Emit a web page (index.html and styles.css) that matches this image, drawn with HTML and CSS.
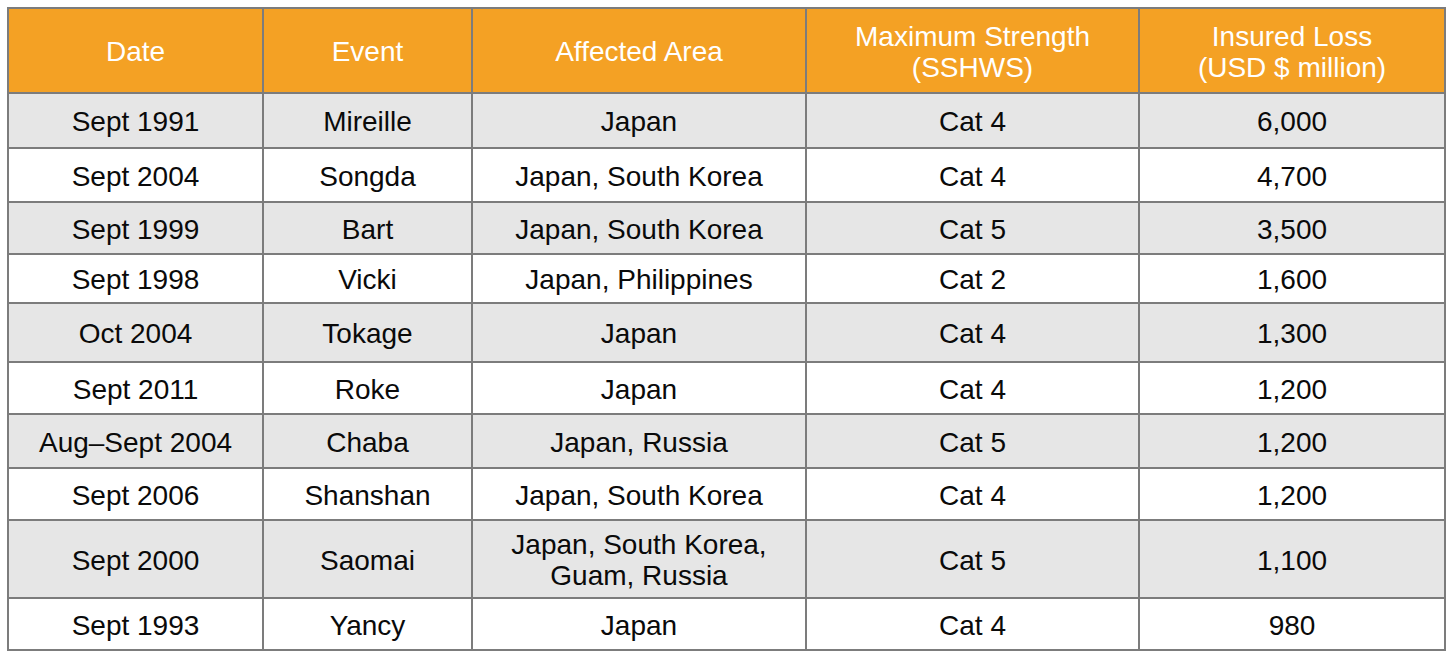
FILE: index.html
```html
<!DOCTYPE html>
<html>
<head>
<meta charset="utf-8">
<link rel="stylesheet" href="styles.css">
</head>
<body>
<div class="wrap">
<table class="loss">
<colgroup>
<col class="c1"><col class="c2"><col class="c3"><col class="c4"><col class="c5">
</colgroup>
<thead>
<tr class="h">
<th>Date</th><th>Event</th><th>Affected Area</th><th>Maximum Strength<br>(SSHWS)</th><th>Insured Loss<br>(USD $ million)</th>
</tr>
</thead>
<tbody>
<tr class="g r1"><td>Sept 1991</td><td>Mireille</td><td>Japan</td><td>Cat 4</td><td>6,000</td></tr>
<tr class="r2"><td>Sept 2004</td><td>Songda</td><td>Japan, South Korea</td><td>Cat 4</td><td>4,700</td></tr>
<tr class="g r3"><td>Sept 1999</td><td>Bart</td><td>Japan, South Korea</td><td>Cat 5</td><td>3,500</td></tr>
<tr class="r4"><td>Sept 1998</td><td>Vicki</td><td>Japan, Philippines</td><td>Cat 2</td><td>1,600</td></tr>
<tr class="g r5"><td>Oct 2004</td><td>Tokage</td><td>Japan</td><td>Cat 4</td><td>1,300</td></tr>
<tr class="r6"><td>Sept 2011</td><td>Roke</td><td>Japan</td><td>Cat 4</td><td>1,200</td></tr>
<tr class="g r7"><td>Aug–Sept 2004</td><td>Chaba</td><td>Japan, Russia</td><td>Cat 5</td><td>1,200</td></tr>
<tr class="r8"><td>Sept 2006</td><td>Shanshan</td><td>Japan, South Korea</td><td>Cat 4</td><td>1,200</td></tr>
<tr class="g r9"><td>Sept 2000</td><td>Saomai</td><td>Japan, South Korea,<br>Guam, Russia</td><td>Cat 5</td><td>1,100</td></tr>
<tr class="r10"><td>Sept 1993</td><td>Yancy</td><td>Japan</td><td>Cat 4</td><td>980</td></tr>
</tbody>
</table>
</div>
</body>
</html>
```

FILE: styles.css
```css
html, body {
  margin: 0;
  padding: 0;
  background: #ffffff;
}
.wrap {
  padding: 7px 0 0 7px;
}
.loss {
  border-collapse: collapse;
  table-layout: fixed;
  width: 1439px;
  font-family: "Liberation Sans", Arial, sans-serif;
  font-size: 28px;
  color: #0a0a0a;
}
.c1 { width: 255px; }
.c2 { width: 209px; }
.c3 { width: 334px; }
.c4 { width: 333px; }
.c5 { width: 306px; }
.loss th, .loss td {
  border: 2px solid #7c7c7c;
  text-align: center;
  vertical-align: middle;
  padding: 2px 0 0 0;
  line-height: 31px;
}
.loss th {
  background: #f4a124;
  color: #ffffff;
  font-weight: normal;
}
.h { height: 85px; }
.g td { background: #e6e6e6; }
.r1 { height: 55px; }
.r2 { height: 54px; }
.r3 { height: 52px; }
.r4 { height: 49px; }
.r5 { height: 59px; }
.r6 { height: 52px; }
.r7 { height: 54px; }
.r8 { height: 52px; }
.r9 { height: 78px; }
.r10 { height: 52px; }
```
